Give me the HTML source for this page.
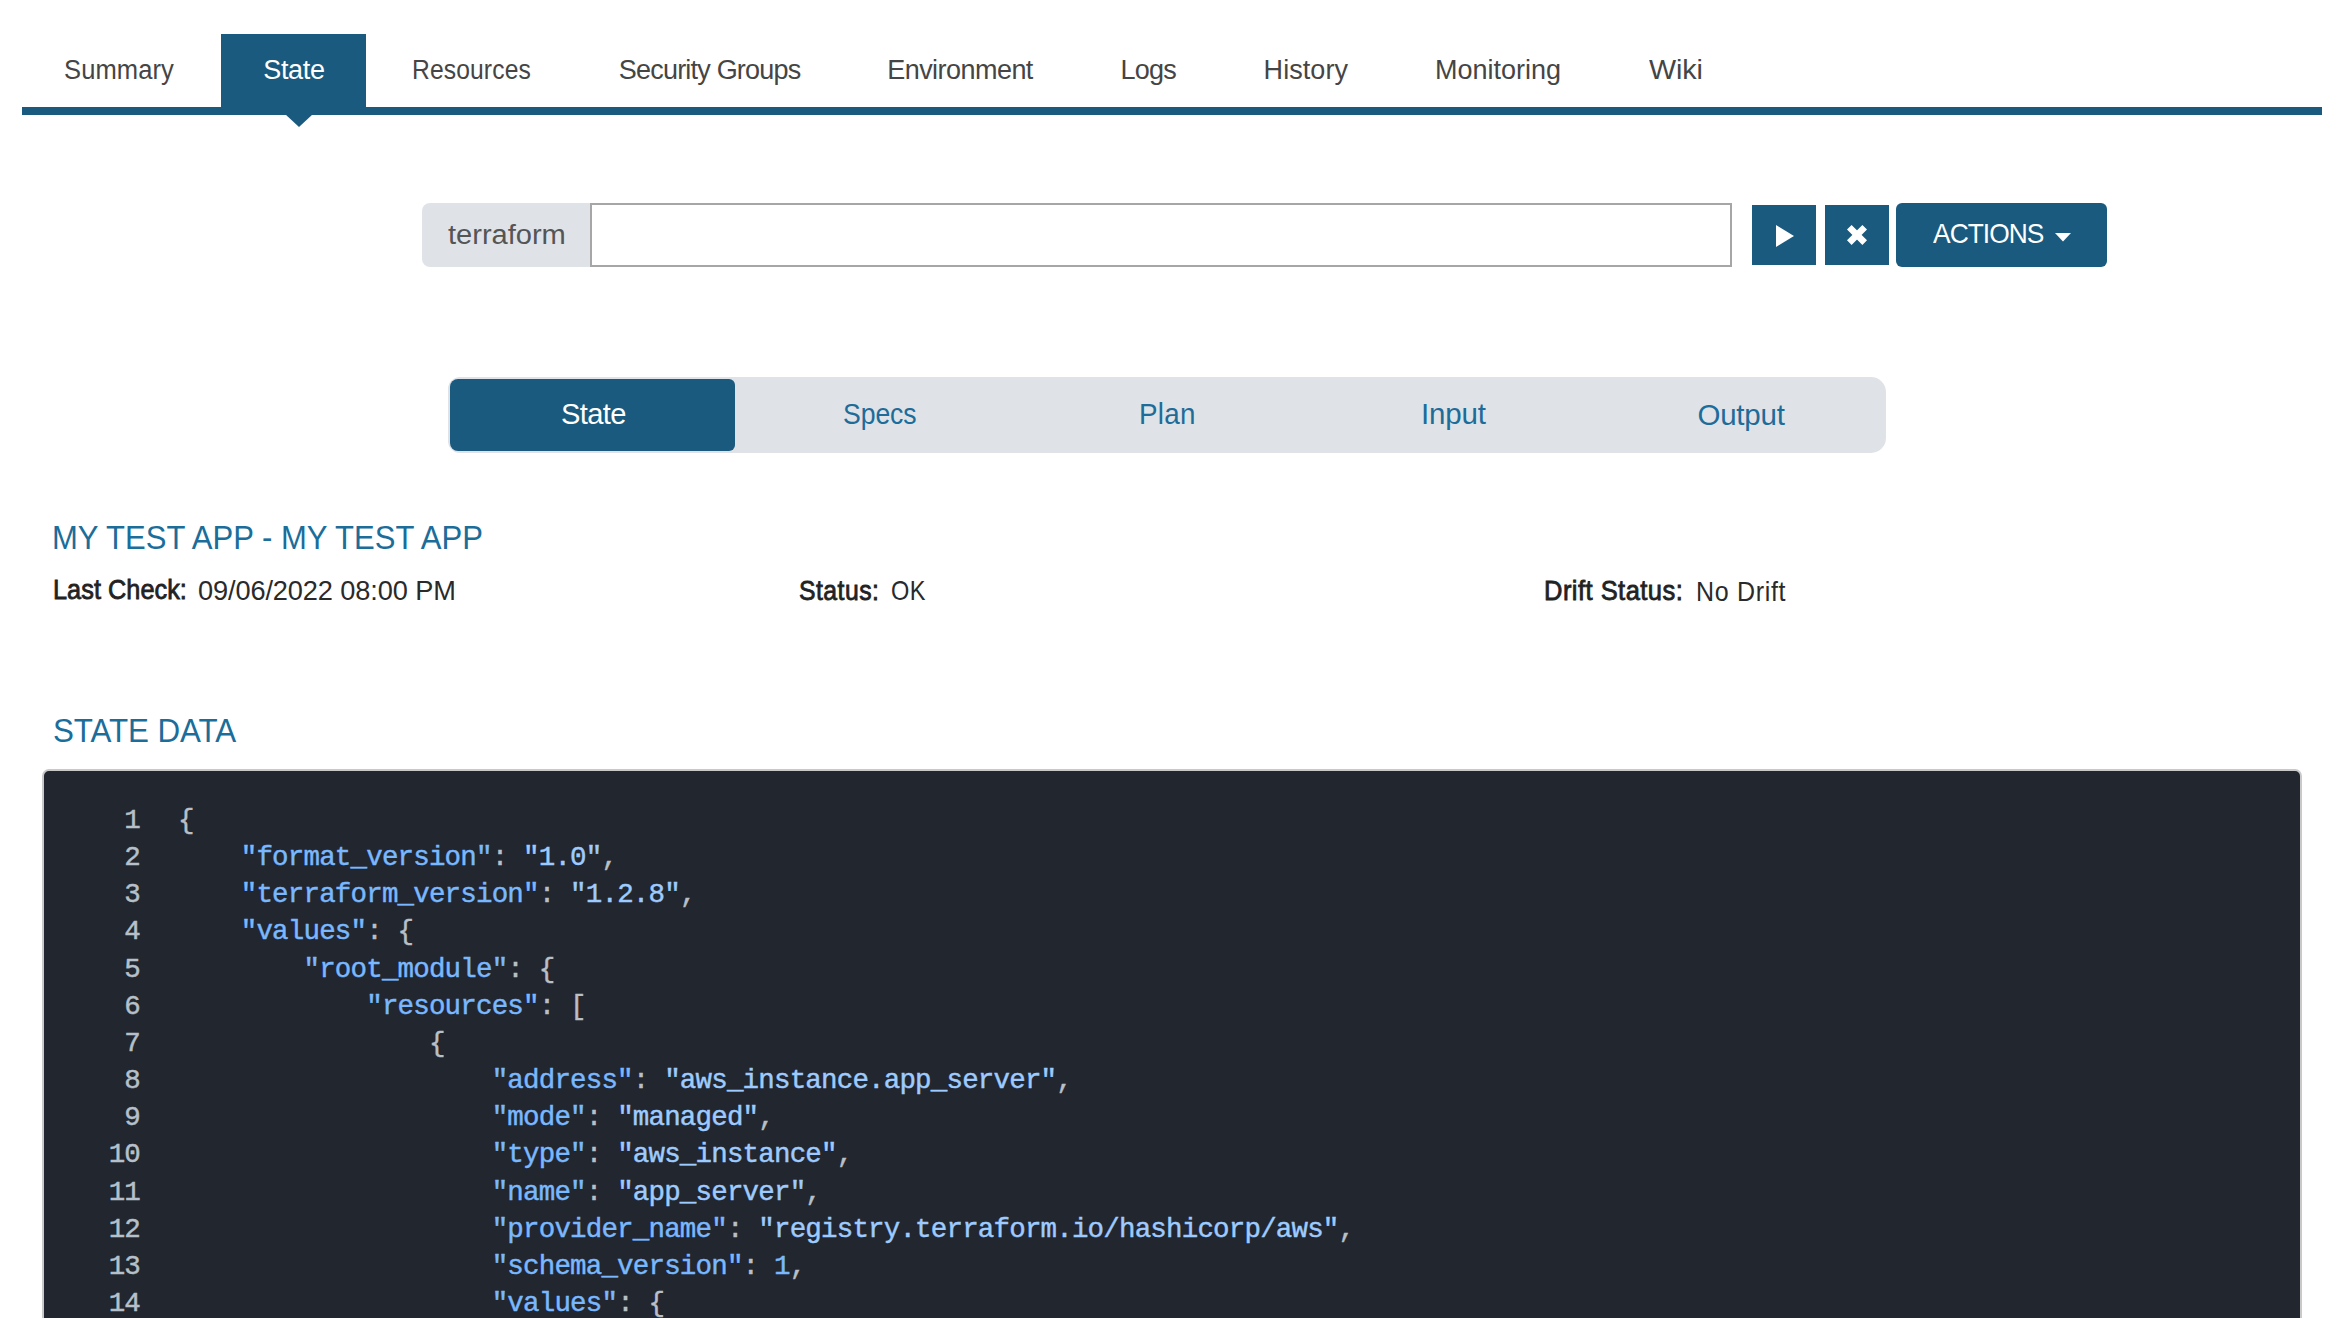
<!DOCTYPE html>
<html>
<head>
<meta charset="utf-8">
<style>
*{box-sizing:border-box;margin:0;padding:0}
html,body{width:2342px;height:1318px;overflow:hidden;background:#fff;font-family:"Liberation Sans",sans-serif}
.t{position:absolute;white-space:nowrap;line-height:40px}
.tabbar{position:absolute;left:22px;top:107px;width:2300px;height:8px;background:#1a5a7e}
.tabact{position:absolute;left:221px;top:34px;width:145px;height:74px;background:#1a5a7e}
.arrow{position:absolute;left:285px;top:114px;width:0;height:0;border-left:14px solid transparent;border-right:14px solid transparent;border-top:13px solid #1a5a7e}
.lbl{position:absolute;left:422px;top:203px;width:168px;height:64px;background:#dfe3e8;border-radius:8px 0 0 8px}
.inp{position:absolute;left:590px;top:203px;width:1142px;height:64px;border:2px solid #a6a6a6;background:#fff}
.btn{position:absolute;top:205px;width:64px;height:60px;background:#1a5a7e}
.btn svg{display:block}
.act{position:absolute;left:1896px;top:203px;width:211px;height:64px;background:#1a5a7e;border-radius:6px}
.caret{position:absolute;left:2055px;top:232px}
.seg{position:absolute;left:448px;top:377px;width:1438px;height:76px;background:#dfe3e8;border-radius:12px 15px 15px 12px}
.segon{position:absolute;left:450px;top:379px;width:285px;height:72px;background:#1a5a7e;border-radius:8px 6px 6px 8px}
.code{position:absolute;left:42px;top:769px;width:2260px;height:700px;background:#22262e;border:2px solid #c9c9c9;border-radius:7px}
.ln{position:absolute;left:58px;width:82px;text-align:right;font-family:"Liberation Mono",monospace;font-size:27.5px;letter-spacing:-0.82px;line-height:37.15px;color:#b6c0ca;-webkit-text-stroke:0.45px}
.cl{position:absolute;left:178px;font-family:"Liberation Mono",monospace;font-size:27.5px;letter-spacing:-0.82px;line-height:37.15px;color:#b9bfc6;white-space:pre;-webkit-text-stroke:0.45px}
.k{color:#79b8ff}
.s{color:#9ecbff}
.n{color:#79b8ff}

</style>
</head>
<body>
<div class="tabact"></div>
<div class="tabbar"></div>
<div class="arrow"></div>
<div class="lbl"></div>
<div class="inp"></div>
<div class="btn" style="left:1752px"><svg width="64" height="60" viewBox="0 0 64 60"><polygon points="24,20 24,42 42,31" fill="#fff"/></svg></div>
<div class="btn" style="left:1825px"><svg width="64" height="60" viewBox="0 0 64 60"><path d="M24.3,22.2 L39.7,37.6 M39.7,22.2 L24.3,37.6" stroke="#fff" stroke-width="6.5"/></svg></div>
<div class="act"></div>
<svg class="caret" style="top:233px" width="16" height="9" viewBox="0 0 16 9"><polygon points="0,0 16,0 8,8.5" fill="#fff"/></svg>
<div class="seg"></div>
<div class="segon"></div>
<div class="code"></div>
<div class="ln" style="top:802px">1<br>2<br>3<br>4<br>5<br>6<br>7<br>8<br>9<br>10<br>11<br>12<br>13<br>14</div>
<div class="cl" style="top:802px">{
    <span class="k">"format_version"</span>: <span class="s">"1.0"</span>,
    <span class="k">"terraform_version"</span>: <span class="s">"1.2.8"</span>,
    <span class="k">"values"</span>: {
        <span class="k">"root_module"</span>: {
            <span class="k">"resources"</span>: [
                {
                    <span class="k">"address"</span>: <span class="s">"aws_instance.app_server"</span>,
                    <span class="k">"mode"</span>: <span class="s">"managed"</span>,
                    <span class="k">"type"</span>: <span class="s">"aws_instance"</span>,
                    <span class="k">"name"</span>: <span class="s">"app_server"</span>,
                    <span class="k">"provider_name"</span>: <span class="s">"registry.terraform.io/hashicorp/aws"</span>,
                    <span class="k">"schema_version"</span>: <span class="n">1</span>,
                    <span class="k">"values"</span>: {
</div>

<div class="t" style="left:64.00px;top:50.40px;font-size:27px;letter-spacing:0.100px;color:#454545;transform:scaleX(0.9461);transform-origin:0 0">Summary</div>
<div class="t" style="left:263.30px;top:50.40px;font-size:27px;letter-spacing:-0.350px;color:#fff">State</div>
<div class="t" style="left:411.50px;top:50.40px;font-size:27px;letter-spacing:0.125px;color:#454545;transform:scaleX(0.9134);transform-origin:0 0">Resources</div>
<div class="t" style="left:618.80px;top:50.40px;font-size:27px;letter-spacing:-0.800px;color:#454545">Security Groups</div>
<div class="t" style="left:887.20px;top:50.40px;font-size:27px;letter-spacing:-0.540px;color:#454545">Environment</div>
<div class="t" style="left:1120.60px;top:50.40px;font-size:27px;letter-spacing:-0.800px;color:#454545">Logs</div>
<div class="t" style="left:1263.60px;top:50.40px;font-size:27px;letter-spacing:0.067px;color:#454545">History</div>
<div class="t" style="left:1435.00px;top:50.40px;font-size:27px;letter-spacing:0.000px;color:#454545">Monitoring</div>
<div class="t" style="left:1649.10px;top:50.40px;font-size:27px;letter-spacing:-0.100px;color:#454545;transform:scaleX(1.0633);transform-origin:0 0">Wiki</div>
<div class="t" style="left:448.00px;top:215.00px;font-size:27px;letter-spacing:-0.025px;color:#555;transform:scaleX(1.0778);transform-origin:0 0">terraform</div>
<div class="t" style="left:1932.60px;top:214.40px;font-size:28px;letter-spacing:-1.000px;color:#fff;transform:scaleX(0.9407);transform-origin:0 0">ACTIONS</div>
<div class="t" style="left:560.70px;top:394.00px;font-size:29.5px;letter-spacing:-0.650px;color:#fff;transform:scaleX(0.9859);transform-origin:0 0">State</div>
<div class="t" style="left:843.10px;top:394.00px;font-size:29.5px;letter-spacing:-0.075px;color:#1d6c99;transform:scaleX(0.9013);transform-origin:0 0">Specs</div>
<div class="t" style="left:1139.00px;top:394.00px;font-size:29.5px;letter-spacing:0.300px;color:#1d6c99;transform:scaleX(0.9411);transform-origin:0 0">Plan</div>
<div class="t" style="left:1421.10px;top:394.00px;font-size:29.5px;letter-spacing:-0.200px;color:#1d6c99">Input</div>
<div class="t" style="left:1697.50px;top:395.00px;font-size:29.5px;letter-spacing:-0.240px;color:#1d6c99">Output</div>
<div class="t" style="left:52.20px;top:517.80px;font-size:33.4px;letter-spacing:0.008px;color:#1b6d9a;transform:scaleX(0.9296);transform-origin:0 0">MY TEST APP - MY TEST APP</div>
<div class="t" style="left:53.20px;top:570.00px;font-size:27.2px;letter-spacing:0.050px;color:#222;-webkit-text-stroke:0.8px;transform:scaleX(0.9294);transform-origin:0 0">Last Check:</div>
<div class="t" style="left:198.00px;top:571.40px;font-size:27.2px;letter-spacing:-0.122px;color:#2a2a2a">09/06/2022 08:00 PM</div>
<div class="t" style="left:799.20px;top:571.00px;font-size:27.2px;letter-spacing:0.517px;color:#222;-webkit-text-stroke:0.8px;transform:scaleX(0.9105);transform-origin:0 0">Status:</div>
<div class="t" style="left:891.40px;top:571.40px;font-size:27.2px;letter-spacing:0.400px;color:#2a2a2a;transform:scaleX(0.8661);transform-origin:0 0">OK</div>
<div class="t" style="left:1544.00px;top:570.60px;font-size:27.2px;letter-spacing:0.500px;color:#222;-webkit-text-stroke:0.8px;transform:scaleX(0.9379);transform-origin:0 0">Drift Status:</div>
<div class="t" style="left:1695.60px;top:571.60px;font-size:27.2px;letter-spacing:0.729px;color:#2a2a2a;transform:scaleX(0.9198);transform-origin:0 0">No Drift</div>
<div class="t" style="left:52.70px;top:711.40px;font-size:33.3px;letter-spacing:-0.122px;color:#1b6d9a;transform:scaleX(0.9418);transform-origin:0 0">STATE DATA</div>
</body>
</html>
